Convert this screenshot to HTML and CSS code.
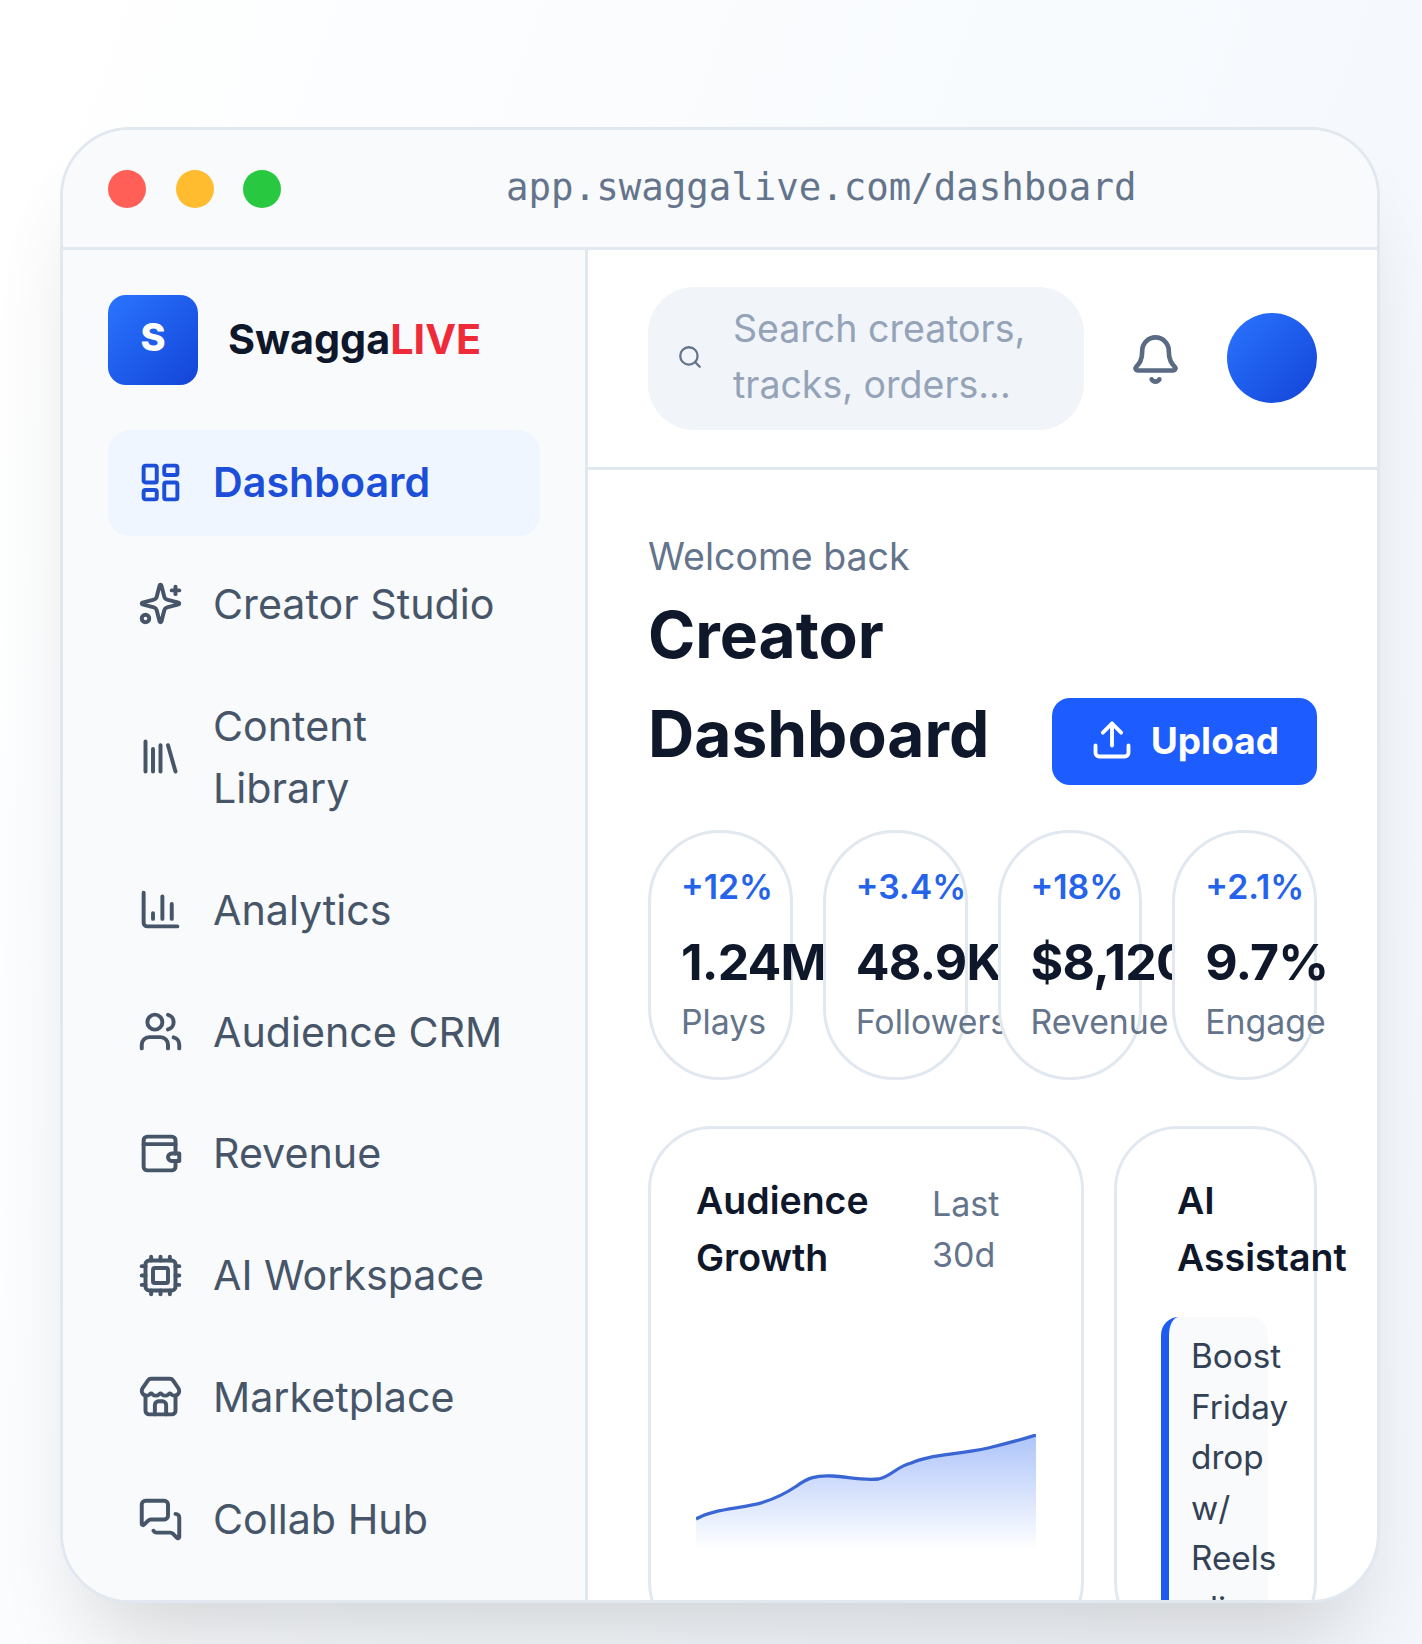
FILE: index.html
```html
<!DOCTYPE html>
<html>
<head>
<title>SwaggaLIVE dashboard</title>
<meta name="viewport" content="width=device-width, initial-scale=1.0">
<link rel="stylesheet" href="styles.css">
</head>
<body>
<div class="window">
	<div class="titlebar">
		<span class="dot dot-red"></span>
		<span class="dot dot-yellow"></span>
		<span class="dot dot-green"></span>
		<div class="url">app.swaggalive.com/dashboard</div>
	</div>
	<div class="app">
		<div class="sidebar">
			<div class="brand">
				<div class="logo">S</div>
				<div class="brand-name">Swagga<span class="live">LIVE</span></div>
			</div>
			<div class="nav">
				<a class="nav-item active">
					<svg class="icon" viewBox="0 0 24 24"><rect width="7" height="9" x="3" y="3" rx="1"/><rect width="7" height="5" x="14" y="3" rx="1"/><rect width="7" height="9" x="14" y="12" rx="1"/><rect width="7" height="5" x="3" y="16" rx="1"/></svg>
					<span>Dashboard</span>
				</a>
				<a class="nav-item">
					<svg class="icon" viewBox="0 0 24 24"><path d="M9.937 15.5A2 2 0 0 0 8.5 14.063l-6.135-1.582a.5.5 0 0 1 0-.962L8.5 9.936A2 2 0 0 0 9.937 8.5l1.582-6.135a.5.5 0 0 1 .963 0L14.063 8.5A2 2 0 0 0 15.5 9.937l6.135 1.581a.5.5 0 0 1 0 .964L15.5 14.063a2 2 0 0 0-1.437 1.437l-1.582 6.135a.5.5 0 0 1-.963 0z"/><path d="M20 3v4"/><path d="M22 5h-4"/><circle cx="4" cy="20" r="2"/></svg>
					<span>Creator Studio</span>
				</a>
				<a class="nav-item">
					<svg class="icon" viewBox="0 0 24 24"><path d="m16 6 4 14"/><path d="M12 6v14"/><path d="M8 8v12"/><path d="M4 4v16"/></svg>
					<span>Content Library</span>
				</a>
				<a class="nav-item">
					<svg class="icon" viewBox="0 0 24 24"><path d="M3 3v16a2 2 0 0 0 2 2h16"/><path d="M18 17V9"/><path d="M13 17V5"/><path d="M8 17v-3"/></svg>
					<span>Analytics</span>
				</a>
				<a class="nav-item">
					<svg class="icon" viewBox="0 0 24 24"><path d="M16 21v-2a4 4 0 0 0-4-4H6a4 4 0 0 0-4 4v2"/><circle cx="9" cy="7" r="4"/><path d="M22 21v-2a4 4 0 0 0-3-3.87"/><path d="M16 3.13a4 4 0 0 1 0 7.75"/></svg>
					<span>Audience CRM</span>
				</a>
				<a class="nav-item">
					<svg class="icon" viewBox="0 0 24 24"><path d="M20 12V5a2 2 0 0 0-2-2H5a2 2 0 0 0-2 2v14a2 2 0 0 0 2 2h13a2 2 0 0 0 2-2v-3"/><path d="M3 7h17"/><path d="M18 12a2 2 0 0 0 0 4h4v-4Z"/></svg>
					<span>Revenue</span>
				</a>
				<a class="nav-item">
					<svg class="icon" viewBox="0 0 24 24"><path d="M12 20v2"/><path d="M12 2v2"/><path d="M17 20v2"/><path d="M17 2v2"/><path d="M2 12h2"/><path d="M2 17h2"/><path d="M2 7h2"/><path d="M20 12h2"/><path d="M20 17h2"/><path d="M20 7h2"/><path d="M7 20v2"/><path d="M7 2v2"/><rect x="4" y="4" width="16" height="16" rx="2"/><rect x="8" y="8" width="8" height="8" rx="1"/></svg>
					<span>AI Workspace</span>
				</a>
				<a class="nav-item">
					<svg class="icon" viewBox="0 0 24 24"><path d="M15 21v-5a2 2 0 0 0-2-2h-2a2 2 0 0 0-2 2v5"/><path d="M17.774 10.31a1.12 1.12 0 0 0-1.549 0 2.5 2.5 0 0 1-3.451 0 1.12 1.12 0 0 0-1.548 0 2.5 2.5 0 0 1-3.452 0 1.12 1.12 0 0 0-1.549 0 2.5 2.5 0 0 1-3.77-3.248l2.889-4.184A2 2 0 0 1 7 2h10a2 2 0 0 1 1.653.873l2.895 4.192a2.5 2.5 0 0 1-3.774 3.244"/><path d="M4 10.95V19a2 2 0 0 0 2 2h12a2 2 0 0 0 2-2v-8.05"/></svg>
					<span>Marketplace</span>
				</a>
				<a class="nav-item">
					<svg class="icon" viewBox="0 0 24 24"><path d="M16 10a2 2 0 0 1-2 2H6.828a2 2 0 0 0-1.414.586l-2.202 2.202A.71.71 0 0 1 2 14.286V4a2 2 0 0 1 2-2h10a2 2 0 0 1 2 2z"/><path d="M20 9a2 2 0 0 1 2 2v10.286a.71.71 0 0 1-1.212.502l-2.202-2.202A2 2 0 0 0 17.172 19H10a2 2 0 0 1-1.732-1"/></svg>
					<span>Collab Hub</span>
				</a>
			</div>
		</div>
		<div class="main">
			<div class="topbar">
				<div class="search">
					<svg class="search-icon" viewBox="0 0 24 24"><circle cx="11" cy="11" r="8"/><path d="m21 21-4.3-4.3"/></svg>
					<span class="search-text">Search creators, tracks, orders...</span>
				</div>
				<svg class="bell" viewBox="0 0 24 24"><path d="M10.268 21a2 2 0 0 0 3.464 0"/><path d="M3.262 15.326A1 1 0 0 0 4 17h16a1 1 0 0 0 .74-1.673C19.41 13.956 18 12.499 18 8A6 6 0 0 0 6 8c0 4.499-1.411 5.956-2.738 7.326"/></svg>
				<div class="avatar"></div>
			</div>
			<div class="content">
				<div class="page-head">
					<div>
						<div class="welcome">Welcome back</div>
						<h1>Creator Dashboard</h1>
					</div>
					<button class="upload">
						<svg class="upload-icon" viewBox="0 0 24 24"><path d="M12 3v12"/><path d="m17 8-5-5-5 5"/><path d="M21 15v4a2 2 0 0 1-2 2H5a2 2 0 0 1-2-2v-4"/></svg>
						Upload
					</button>
				</div>
				<div class="stats">
					<div class="stat">
						<div class="stat-pct">+12%</div>
						<div class="stat-value">1.24M</div>
						<div class="stat-label">Plays</div>
					</div>
					<div class="stat">
						<div class="stat-pct">+3.4%</div>
						<div class="stat-value">48.9K</div>
						<div class="stat-label">Followers</div>
					</div>
					<div class="stat">
						<div class="stat-pct">+18%</div>
						<div class="stat-value">$8,120</div>
						<div class="stat-label">Revenue</div>
					</div>
					<div class="stat">
						<div class="stat-pct">+2.1%</div>
						<div class="stat-value">9.7%</div>
						<div class="stat-label">Engage</div>
					</div>
				</div>
				<div class="panels">
					<div class="panel panel-growth">
						<div class="panel-head">
							<div class="panel-title">Audience Growth</div>
							<div class="panel-note">Last 30d</div>
						</div>
						<svg class="chart" viewBox="0 0 341 116" preserveAspectRatio="none">
							<defs>
								<linearGradient id="chartfill" x1="0" y1="0" x2="0" y2="1">
									<stop offset="0" stop-color="#1d5cf0" stop-opacity=".36"/>
									<stop offset="1" stop-color="#1d5cf0" stop-opacity="0"/>
								</linearGradient>
							</defs>
							<path fill="url(#chartfill)" d="M0 85C19 74 47 75 68 68C84 63 92 58 101 52C112 44 120 41 137 42C153 43 168 47 183 45C197 42 200 33 216 29C232 21 260 21 293 14C310 10 325 6 341 1V116H0Z"/>
							<path class="chart-line" d="M0 85C19 74 47 75 68 68C84 63 92 58 101 52C112 44 120 41 137 42C153 43 168 47 183 45C197 42 200 33 216 29C232 21 260 21 293 14C310 10 325 6 341 1"/>
						</svg>
					</div>
					<div class="panel panel-ai">
						<div class="panel-title">AI Assistant</div>
						<div class="tip">Boost Friday drop w/ Reels clips</div>
					</div>
				</div>
			</div>
		</div>
	</div>
</div>
</body>
</html>
```
FILE: styles.css
```css
* {
	box-sizing: border-box;
}
html, body {
	height: 100%;
}
body {
	margin: 0;
	overflow: hidden;
	padding: 127px 42px 41px 60px;
	background: linear-gradient(110deg, #ffffff 0%, #f5f9fd 70%, #f3f6fa 100%);
	font-family: "Inter", "Liberation Sans", sans-serif;
	color: #0f172a;
}
svg {
	fill: none;
	stroke: currentColor;
	stroke-width: 2.1;
	stroke-linecap: round;
	stroke-linejoin: round;
	flex: none;
}

.window {
	height: 100%;
	display: flex;
	flex-direction: column;
	background: #ffffff;
	border: 3px solid #e2e8f0;
	border-radius: 70px;
	overflow: hidden;
	box-shadow: 0 60px 90px -30px rgba(0, 0, 0, .16);
}
.titlebar {
	display: flex;
	align-items: center;
	gap: 29.5px;
	height: 120px;
	flex: none;
	padding: 0 45px;
	background: #f8fafc;
	border-bottom: 3px solid #e2e8f0;
}
.dot {
	width: 38px;
	height: 38px;
	border-radius: 50%;
	flex: none;
}
.dot-red {
	background: #ff5f57;
}
.dot-yellow {
	background: #febc2e;
}
.dot-green {
	background: #28c840;
}
.url {
	flex: 1;
	text-align: center;
	padding-bottom: 4px;
	font-family: "DejaVu Sans Mono", monospace;
	font-size: 37.4px;
	color: #64748b;
}

.app {
	display: flex;
	flex: 1;
	min-height: 0;
}
.sidebar {
	width: 525px;
	flex: none;
	padding: 45px 45px 0;
	background: #f8fafc;
	border-right: 3px solid #e2e8f0;
}
.brand {
	display: flex;
	align-items: center;
	gap: 30px;
	margin-bottom: 45px;
}
.logo {
	width: 90px;
	height: 90px;
	border-radius: 18px;
	background: linear-gradient(135deg, #2a75ff, #1344d8);
	color: #ffffff;
	font-size: 38px;
	font-weight: 800;
	display: flex;
	align-items: center;
	justify-content: center;
	padding-bottom: 6px;
}
.brand-name {
	font-size: 41.3px;
	font-weight: 700;
	padding-bottom: 2px;
}
.live {
	color: #ef2b3a;
}
.nav {
	display: flex;
	flex-direction: column;
	gap: 15.9px;
}
.nav-item {
	display: flex;
	align-items: center;
	gap: 30px;
	padding: 21px 30px 23px;
	min-height: 106px;
	border-radius: 22px;
	font-size: 41.2px;
	line-height: 62px;
	font-weight: 400;
	color: #475569;
}
.nav-item.active {
	background: #eff6ff;
	color: #1d4ed8;
	font-weight: 600;
}
.icon {
	width: 45px;
	height: 45px;
}

.main {
	flex: 1;
	min-width: 0;
}
.topbar {
	display: flex;
	align-items: center;
	gap: 45px;
	height: 220px;
	padding: 0 60px 2px;
	border-bottom: 3px solid #e2e8f0;
}
.search {
	flex: 1;
	display: flex;
	align-items: center;
	gap: 30px;
	margin-top: 2px;
	padding: 0 29px 4px;
	height: 143px;
	border-radius: 46px;
	background: #f1f5f9;
}
.search-icon {
	width: 26px;
	height: 26px;
	color: #64748b;
}
.search-text {
	font-size: 37.5px;
	line-height: 56px;
	color: #94a3b8;
}
.bell {
	width: 53px;
	height: 53px;
	margin-top: 3px;
	color: #5a6a82;
}
.avatar {
	width: 90px;
	height: 90px;
	border-radius: 50%;
	background: linear-gradient(135deg, #2a75ff, #1344d8);
	flex: none;
}
.content {
	padding: 61px 60px 0;
}
.page-head {
	display: flex;
	align-items: flex-end;
	justify-content: space-between;
}
.welcome {
	font-size: 37.5px;
	line-height: 52px;
	margin-bottom: 2px;
	color: #64748b;
}
h1 {
	margin: 0 0 2px;
	width: 360px;
	font-size: 64px;
	line-height: 99px;
	font-weight: 700;
}
.upload {
	display: flex;
	align-items: center;
	gap: 17px;
	padding: 0 38px 3px;
	height: 87px;
	border: none;
	border-radius: 18px;
	background: #1d5cff;
	color: #ffffff;
	font-family: inherit;
	font-size: 37px;
	font-weight: 700;
}
.upload-icon {
	width: 44px;
	height: 44px;
}

.stats {
	display: grid;
	grid-template-columns: repeat(4, minmax(0, 1fr));
	gap: 30px;
	margin-top: 45px;
}
.stat {
	height: 250px;
	padding: 31px 0 0 30px;
	background: #ffffff;
	border: 3px solid #e2e8f0;
	border-radius: 72px;
	white-space: nowrap;
}
.stat-pct {
	font-size: 33.8px;
	line-height: 46px;
	font-weight: 600;
	color: #2563eb;
}
.stat-value {
	margin-top: 18px;
	font-size: 50px;
	line-height: 68px;
	font-weight: 700;
	letter-spacing: -.8px;
}
.stat-label {
	margin-top: 3px;
	font-size: 33.8px;
	line-height: 46px;
	color: #64748b;
}

.panels {
	display: flex;
	gap: 30px;
	margin-top: 46px;
}
.panel {
	height: 520px;
	background: #ffffff;
	border: 3px solid #e2e8f0;
	border-radius: 64px;
	padding: 43px 47px 0 45px;
}
.panel-growth {
	width: 436px;
	flex: none;
}
.panel-ai {
	flex: 1;
	min-width: 0;
	padding: 43px 0 0 60px;
}
.panel-head {
	display: flex;
	align-items: center;
}
.panel-head .panel-title {
	width: 236px;
	flex: none;
}
.panel-title {
	font-size: 37.5px;
	line-height: 57px;
	font-weight: 600;
}
.panel-note {
	width: 90px;
	font-size: 34px;
	line-height: 51px;
	color: #64748b;
}
.chart {
	display: block;
	width: 340px;
	height: 116px;
	margin-top: 148px;
	stroke: none;
}
.chart-line {
	fill: none;
	stroke: #3a66d4;
	stroke-width: 3.3;
	stroke-linecap: butt;
}
.tip {
	width: 107px;
	margin: 31px 0 0 -16px;
	padding: 14px 0 0 22px;
	background: #f8fafc;
	border-left: 8px solid #1d5cf0;
	border-radius: 18px;
	font-size: 33.3px;
	line-height: 50.6px;
	color: #334155;
}
```
